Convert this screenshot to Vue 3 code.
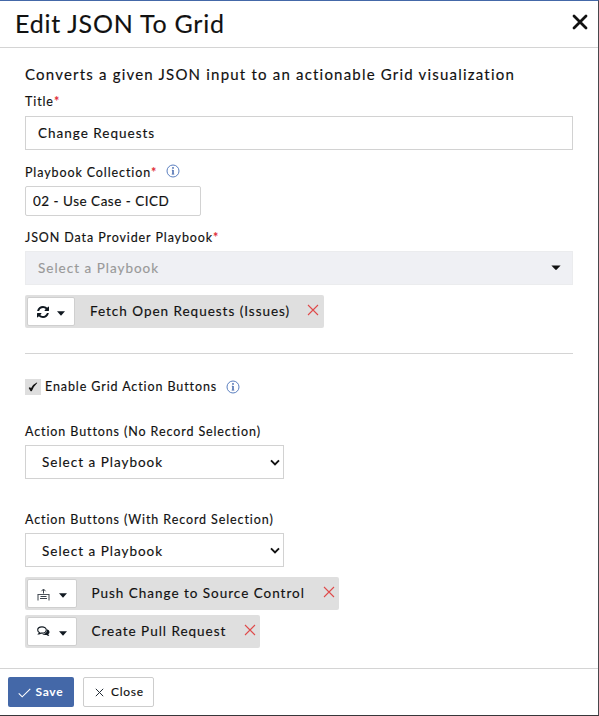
<script setup>
import { ref } from 'vue'

const title = ref('Change Requests')
const collection = ref('02 - Use Case - CICD')
const enabled = ref(true)
const recordActions = [
  { name: 'Push Change to Source Control', icon: 'push', key: 'push' },
  { name: 'Create Pull Request', icon: 'comments', key: 'pull' },
]
</script>

<template>
  <div class="dialog">
    <header class="header">
      <h1>Edit JSON To Grid</h1>
      <button class="dismiss" aria-label="Dismiss">
        <svg width="16" height="16" viewBox="0 0 16 16"><path d="M2 2 14 14M14 2 2 14" stroke="#111" stroke-width="2.8" stroke-linecap="round" /></svg>
      </button>
    </header>

    <main class="body">
      <p class="description">Converts a given JSON input to an actionable Grid visualization</p>
      <label class="label">Title<i>*</i></label>
      <input v-model="title" class="field title-field" />

      <div class="label collection-label">
        Playbook Collection<i>*</i>
        <svg class="info" viewBox="0 0 14 14"><circle cx="7" cy="7" r="6" fill="none" stroke="#5b7fc0" /><path d="M7 6v4.300" fill="none" stroke="#4468ad" stroke-width="1.500" /><path d="M5.800 6.200H7M5.600 10.200h2.800" stroke="#4468ad" stroke-width=".6" /><circle cx="7" cy="3.900" r=".9" fill="#4468ad" /></svg>
      </div>
      <input v-model="collection" class="field collection-field" />

      <label class="label provider-label">JSON Data Provider Playbook<i>*</i></label>
      <div class="provider">
        <span>Select a Playbook</span>
        <svg width="10" height="6" viewBox="0 0 10 6"><path d="M.4.4h9.200L5.800 4.600q-.8.7-1.600 0z" fill="#111" /></svg>
      </div>

      <div class="tag tag-fetch">
        <button class="picker">
          <svg width="12" height="12" viewBox="0 0 1536 1536"><path fill="#101820" d="M1511 928q0 5-1 7-64 268-268 434.500T764 1536q-146 0-282.500-55T238 1324l-129 129q-19 19-45 19t-45-19-19-45V960q0-26 19-45t45-19h448q26 0 45 19t19 45-19 45l-137 137q71 66 161 102t187 36q134 0 250-65t186-179q11-17 53-117 8-23 30-23h192q13 0 22.500 9.500t9.500 22.500zM1536 128v448q0 26-19 45t-45 19h-448q-26 0-45-19t-19-45 19-45l138-138Q969 256 768 256q-134 0-250 65T332 500q-11 17-53 117-8 23-30 23H50q-13 0-22.500-9.500T18 608v-7q65-268 270-434.500T768 0q146 0 284 55.500T1297 212l130-129q19-19 45-19t45 19 19 45z" /></svg>
          <svg class="caret" viewBox="0 0 8 5"><path d="M0 .3h8L4 4.700z" fill="#101820" /></svg>
        </button>
        <span class="tag-name">Fetch Open Requests (Issues)</span>
        <svg class="remove" viewBox="0 0 12 12"><path d="m1 1 10 10M11 1 1 11" stroke="#df4a4a" stroke-width="1.100" /></svg>
      </div>

      <hr />

      <div class="enable">
        <button class="checkbox" role="checkbox" :aria-checked="enabled" @click="enabled = !enabled">
          <svg v-if="enabled" width="10" height="10" viewBox="0 0 10 10"><path d="M.7 6Q1.900 4.300 3 6.200 5 2.300 8.800.6 9.500.5 9.200 1 5.900 4.200 4 8.700q-.9 1-1.700 0z" fill="#111" /></svg>
        </button>
        <span class="label-text">Enable Grid Action Buttons</span>
        <svg class="info" viewBox="0 0 14 14"><circle cx="7" cy="7" r="6" fill="none" stroke="#5b7fc0" /><path d="M7 6v4.300" fill="none" stroke="#4468ad" stroke-width="1.500" /><path d="M5.800 6.200H7M5.600 10.200h2.800" stroke="#4468ad" stroke-width=".6" /><circle cx="7" cy="3.900" r=".9" fill="#4468ad" /></svg>
      </div>

      <label class="label no-record">Action Buttons (No Record Selection)</label>
      <div class="select">
        <span>Select a Playbook</span>
        <svg width="10" height="7" viewBox="0 0 10 7"><path d="m1 1.300 4 4 4-4" fill="none" stroke="#111" stroke-width="1.900" /></svg>
      </div>

      <label class="label with-record">Action Buttons (With Record Selection)</label>
      <div class="select second">
        <span>Select a Playbook</span>
        <svg width="10" height="7" viewBox="0 0 10 7"><path d="m1 1.300 4 4 4-4" fill="none" stroke="#111" stroke-width="1.900" /></svg>
      </div>

      <div v-for="a in recordActions" :key="a.key" class="tag" :class="'tag-' + a.key">
        <button class="picker wide">
          <svg v-if="a.icon === 'push'" width="13" height="13" viewBox="0 0 13 13" fill="none" stroke="#3a424b"><path d="M6.500 5.500V1.500M4.500 3.200 6.500 1l2 2.200M1 12.500v-6M12 12.500v-6M3.500 8.500h6M3 10.500h7" /><path d="M.6 6.500h11.800" stroke-width=".9" /></svg>
          <svg v-else width="13" height="12" viewBox="0 0 13 12"><path d="M9.800 3.300c1.700.5 2.700 1.500 2.700 2.800 0 .9-.5 1.700-1.200 2.200.2.8.6 1.200 1.100 1.700-1.200 0-2.100-.4-2.800-1-1.700.3-3.300 0-4.400-.9 3 .1 5.300-1.700 4.600-4.800z" fill="#101820" /><path d="M5 .9C2.600.9.700 2.200.7 4c0 1.100.7 2 1.700 2.500-.1.600-.4 1.100-.8 1.500 1 0 1.700-.4 2.300-1 .4.100.7.100 1.100.1 2.400 0 4.300-1.400 4.300-3.100S7.400.9 5 .9z" fill="#fff" stroke="#101820" stroke-width="1.100" /></svg>
          <svg class="caret" viewBox="0 0 8 5"><path d="M0 .3h8L4 4.700z" fill="#101820" /></svg>
        </button>
        <span class="tag-name">{{ a.name }}</span>
        <svg class="remove" viewBox="0 0 12 12"><path d="m1 1 10 10M11 1 1 11" stroke="#df4a4a" stroke-width="1.100" /></svg>
      </div>
    </main>

    <footer class="footer">
      <button class="btn save">
        <svg width="13" height="10" viewBox="0 0 13 10"><path d="m.7 5.300 3.500 3.500L12.300.9" fill="none" stroke="#fff" stroke-width="1.100" /></svg>
        <span>Save</span>
      </button>
      <button class="btn close">
        <svg width="9" height="9" viewBox="0 0 9 9"><path d="m.8.8 7.400 7.400M8.200.8.800 8.200" stroke="#222b35" /></svg>
        <span>Close</span>
      </button>
    </footer>
  </div>
</template>

<style>
body { margin: 0; background: #fff; }
</style>

<style scoped>
* { box-sizing: border-box; }
.dialog {
  width: 599px;
  height: 716px;
  display: flex;
  flex-direction: column;
  overflow: hidden;
  background: #fff;
  border-top: 1px solid #4468a8;
  border-right: 1px solid #48484c;
  border-bottom: 1px solid #38363a;
  font-family: Lato, "Liberation Sans", sans-serif;
  color: #111;
  -webkit-text-stroke: 0.15px currentColor;
}
svg { display: block; flex: none; }
button { font: inherit; margin: 0; padding: 0; border: 0; background: none; color: inherit; }
.header {
  height: 47px;
  flex: none;
  display: flex;
  justify-content: space-between;
  align-items: flex-start;
  padding: 6px 10px 0 15px;
  border-bottom: 1px solid #d4d4d4;
}
h1 { margin: 0; font-size: 25px; font-weight: 400; line-height: 32px; letter-spacing: 0.75px; white-space: nowrap; }
.dismiss { padding-top: 7px; }
.body { flex: 1; padding: 16px 25px 0; display: flex; flex-direction: column; align-items: flex-start; min-height: 0; }
.description { margin: 0; font-size: 15px; line-height: 20px; letter-spacing: 1.2px; white-space: nowrap; }
.label, .label-text { font-size: 12.500px; line-height: 16px; letter-spacing: 0.9px; white-space: nowrap; }
.label { margin-top: 10px; display: flex; height: 16px; flex: none; }
.label i { color: #e0202c; font-style: normal; }
.info { width: 14px; height: 14px; margin-left: 9px; }
.field {
  border: 1px solid #d2d2d2;
  border-radius: 0;
  outline: 0;
  background: #fff;
  font-family: inherit;
  font-size: 13.500px;
  letter-spacing: 1px;
  color: #111;
}
.title-field { width: 548px; height: 34px; margin-top: 6px; padding: 0 12px; }
.label.collection-label { margin-top: 15px; }
.collection-label .info { margin-top: -1px; }
.collection-field { width: 176px; height: 30px; margin-top: 5px; padding: 0 7px; border-radius: 2px; letter-spacing: 0.5px; }
.label.provider-label { margin-top: 14px; }
.provider {
  width: 548px; height: 34px; margin-top: 5px; padding: 0 11px 0 12px;
  display: flex; align-items: center; justify-content: space-between;
  background: #eff0f4; border: 1px solid #ebecee;
  color: #999; font-size: 13.500px; letter-spacing: 1px;
}
.tag {
  height: 33px; flex: none; margin-top: 10px; padding: 2px 5px 2px 2px;
  display: flex; align-items: center; background: #dfdfdf; border-radius: 2px;
}
.tag-fetch { width: 299px; }
.tag-push { width: 314px; }
.tag-pull { width: 235px; margin-top: 5px; }
.tag-push, .tag-pull { padding-right: 4px; }
.picker {
  width: 48px; height: 29px; padding: 1px 9px 0; flex: none;
  display: flex; align-items: center; justify-content: space-between;
  background: #fff; border: 1px solid #cfcfcf; border-radius: 2px;
}
.picker.wide { width: 50px; }
.caret { width: 8px; height: 5px; margin-top: 2px; }
.tag-name { margin: -2px 0 0 15px; flex: 1; font-size: 13.500px; line-height: 18px; letter-spacing: 0.98px; white-space: nowrap; }
.wide + .tag-name { margin-left: 14.500px; }
.remove { width: 12px; height: 12px; margin-top: -3px; }
hr { width: 548px; height: 1px; margin: 25px 0 0; border: 0; background: #d4d4d4; flex: none; }
.enable { display: flex; align-items: center; height: 16px; margin-top: 25px; flex: none; }
.checkbox { width: 16px; height: 16px; display: grid; place-items: center; background: #dedede; margin-right: 4px; }
.label.no-record { margin-top: 29px; }
.label.with-record { margin-top: 33px; }
.select {
  width: 259px; height: 34px; flex: none; margin-top: 5px; padding: 0 3px 0 16px;
  display: flex; align-items: center; justify-content: space-between;
  border: 1px solid #d2d2d2; font-size: 13.500px; letter-spacing: 1px;
}
.second span { padding-top: 2px; }
.footer { height: 47px; flex: none; display: flex; gap: 9px; padding: 8px 8px 0; border-top: 1px solid #d4d4d4; }
.btn { height: 30px; display: flex; align-items: center; border-radius: 2px; font-size: 12px; letter-spacing: 0.7px; }
.save { width: 66px; padding-left: 10px; gap: 4.500px; background: #4468a8; color: #fff; font-weight: 700; -webkit-text-stroke: 0; }
.close { width: 71px; padding-left: 11px; gap: 7px; border: 1px solid #cdcdcd; }
.btn svg { margin-top: 1px; }
.btn span { margin-top: -2px; }
</style>
